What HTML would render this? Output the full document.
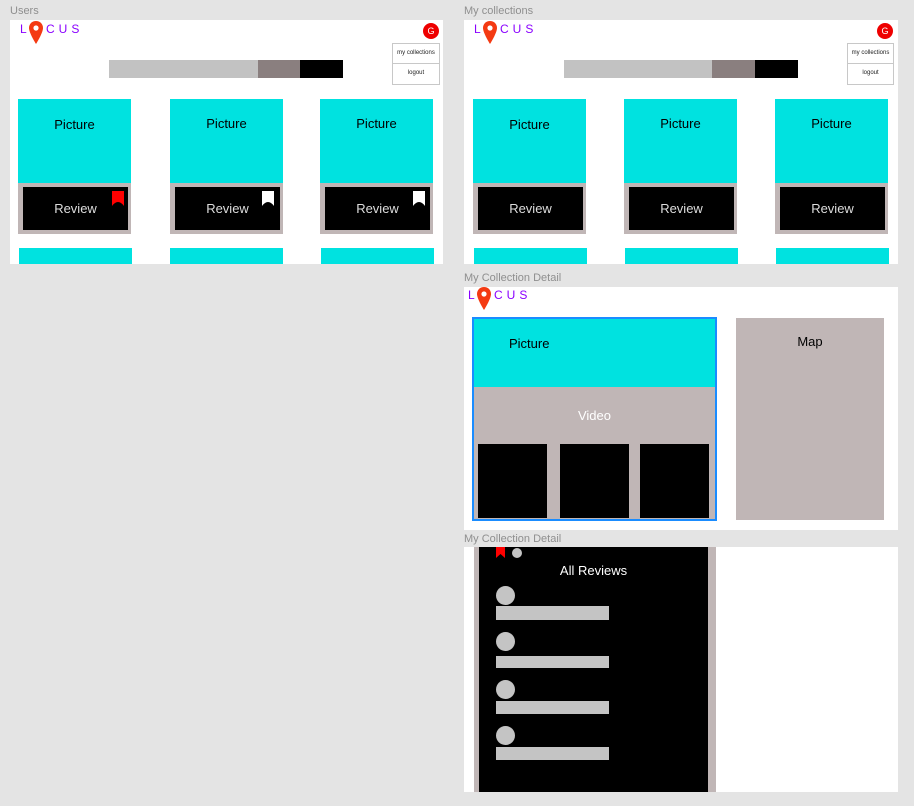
<!DOCTYPE html>
<html><head><meta charset="utf-8"><style>
*{margin:0;padding:0;box-sizing:border-box}
body{width:914px;height:806px;background:#e4e4e4;position:relative;overflow:hidden;font-family:"Liberation Sans",sans-serif}
div,span,svg{position:absolute}
.lbl{font-size:11px;color:#8f8f8f}
.fr{background:#fff}
.cy{background:#00e2e0;color:#000;font-size:13px;text-align:center}
.gr{background:#c0b6b6}
.bk{background:#000;color:#ddd;font-size:13px;text-align:center}
.logo{font-size:12px;color:#8a00ff;letter-spacing:4px}
.av{width:16px;height:16px;border-radius:50%;background:#e00;color:#fff;font-size:9px;text-align:center;line-height:16px}
.menu{border:1px solid #c8c8c8;background:#fff;font-size:6px;color:#222;text-align:center}
.gc{background:#c4c4c4}
</style></head><body>

<div class="lbl" style="left:10px;top:5px">Users</div>
<div class="lbl" style="left:464px;top:5px">My collections</div>
<div class="lbl" style="left:464px;top:272px">My Collection Detail</div>
<div class="lbl" style="left:464px;top:533px">My Collection Detail</div>

<!-- Frame 1 -->
<div class="fr" style="left:10px;top:20px;width:433px;height:244px;overflow:hidden">
  <div class="logo" style="left:10px;top:2px">L</div>
  <svg style="left:19px;top:1px" width="14" height="23" viewBox="0 0 14 23"><path d="M7 0C3 0 0 3 0 7c0 5 7 16 7 16s7-11 7-16C14 3 11 0 7 0z" fill="#f43a12"/><circle cx="7" cy="7" r="2.6" fill="#fff"/></svg>
  <div class="logo" style="left:36px;top:2px">CUS</div>
  <div class="av" style="left:413px;top:3px">G</div>
  <div class="menu" style="left:382px;top:23px;width:48px;height:42px"><div style="left:0;top:6px;width:46px">my collections</div><div style="left:0;top:19px;width:46px;border-top:1px solid #c8c8c8;padding-top:6px">logout</div></div>
  <div style="left:99px;top:40px;width:149px;height:18px;background:#c2c2c2"></div>
  <div style="left:248px;top:40px;width:42px;height:18px;background:#8a7f7f"></div>
  <div style="left:290px;top:40px;width:43px;height:18px;background:#000"></div>

  <div class="cy" style="left:8px;top:79px;width:113px;height:84px;padding-top:18px">Picture</div>
  <div class="gr" style="left:8px;top:163px;width:113px;height:51px"><div class="bk" style="left:5px;top:4px;width:105px;height:43px;line-height:43px">Review</div>
    <svg style="left:94px;top:8px" width="12" height="15" viewBox="0 0 12 15"><path d="M0 0H12V15Q6 7 0 15Z" fill="#f00"/></svg></div>
  <div class="cy" style="left:160px;top:79px;width:113px;height:84px;padding-top:17px">Picture</div>
  <div class="gr" style="left:160px;top:163px;width:113px;height:51px"><div class="bk" style="left:5px;top:4px;width:105px;height:43px;line-height:43px">Review</div>
    <svg style="left:92px;top:8px" width="12" height="15" viewBox="0 0 12 15"><path d="M0 0H12V15Q6 7 0 15Z" fill="#fff"/></svg></div>
  <div class="cy" style="left:310px;top:79px;width:113px;height:84px;padding-top:17px">Picture</div>
  <div class="gr" style="left:310px;top:163px;width:113px;height:51px"><div class="bk" style="left:5px;top:4px;width:105px;height:43px;line-height:43px">Review</div>
    <svg style="left:93px;top:8px" width="12" height="15" viewBox="0 0 12 15"><path d="M0 0H12V15Q6 7 0 15Z" fill="#fff"/></svg></div>
  <div class="cy" style="left:9px;top:228px;width:113px;height:20px"></div>
  <div class="cy" style="left:160px;top:228px;width:113px;height:20px"></div>
  <div class="cy" style="left:311px;top:228px;width:113px;height:20px"></div>
</div>

<!-- Frame 2 -->
<div class="fr" style="left:464px;top:20px;width:434px;height:244px;overflow:hidden">
  <div class="logo" style="left:10px;top:2px">L</div>
  <svg style="left:19px;top:1px" width="14" height="23" viewBox="0 0 14 23"><path d="M7 0C3 0 0 3 0 7c0 5 7 16 7 16s7-11 7-16C14 3 11 0 7 0z" fill="#f43a12"/><circle cx="7" cy="7" r="2.6" fill="#fff"/></svg>
  <div class="logo" style="left:36px;top:2px">CUS</div>
  <div class="av" style="left:413px;top:3px">G</div>
  <div class="menu" style="left:383px;top:23px;width:47px;height:42px"><div style="left:0;top:6px;width:45px">my collections</div><div style="left:0;top:19px;width:45px;border-top:1px solid #c8c8c8;padding-top:6px">logout</div></div>
  <div style="left:100px;top:40px;width:148px;height:18px;background:#c2c2c2"></div>
  <div style="left:248px;top:40px;width:43px;height:18px;background:#8a7f7f"></div>
  <div style="left:291px;top:40px;width:43px;height:18px;background:#000"></div>

  <div class="cy" style="left:9px;top:79px;width:113px;height:84px;padding-top:18px">Picture</div>
  <div class="gr" style="left:9px;top:163px;width:113px;height:51px"><div class="bk" style="left:5px;top:4px;width:105px;height:43px;line-height:43px">Review</div></div>
  <div class="cy" style="left:160px;top:79px;width:113px;height:84px;padding-top:17px">Picture</div>
  <div class="gr" style="left:160px;top:163px;width:113px;height:51px"><div class="bk" style="left:5px;top:4px;width:105px;height:43px;line-height:43px">Review</div></div>
  <div class="cy" style="left:311px;top:79px;width:113px;height:84px;padding-top:17px">Picture</div>
  <div class="gr" style="left:311px;top:163px;width:113px;height:51px"><div class="bk" style="left:5px;top:4px;width:105px;height:43px;line-height:43px">Review</div></div>
  <div class="cy" style="left:10px;top:228px;width:113px;height:20px"></div>
  <div class="cy" style="left:161px;top:228px;width:113px;height:20px"></div>
  <div class="cy" style="left:312px;top:228px;width:113px;height:20px"></div>
</div>

<!-- Frame 3 -->
<div class="fr" style="left:464px;top:287px;width:434px;height:243px">
  <div class="logo" style="left:4px;top:1px">L</div>
  <svg style="left:13px;top:0px" width="14" height="23" viewBox="0 0 14 23"><path d="M7 0C3 0 0 3 0 7c0 5 7 16 7 16s7-11 7-16C14 3 11 0 7 0z" fill="#f43a12"/><circle cx="7" cy="7" r="2.6" fill="#fff"/></svg>
  <div class="logo" style="left:30px;top:1px">CUS</div>
  <div style="left:8px;top:30px;width:245px;height:204px;border:2px solid #1a8cff;background:#c0b6b6">
    <div class="cy" style="left:0;top:0;width:241px;height:68px;text-align:left;padding:17px 0 0 35px">Picture</div>
    <div style="left:0;top:89px;width:241px;text-align:center;color:#fff;font-size:13px">Video</div>
    <div style="left:4px;top:125px;width:69px;height:74px;background:#000"></div>
    <div style="left:86px;top:125px;width:69px;height:74px;background:#000"></div>
    <div style="left:166px;top:125px;width:69px;height:74px;background:#000"></div>
  </div>
  <div class="gr" style="left:272px;top:31px;width:148px;height:202px;text-align:center;font-size:13px;padding-top:16px;color:#000">Map</div>
</div>

<!-- Frame 4 -->
<div class="fr" style="left:464px;top:547px;width:434px;height:245px;overflow:hidden">
  <div class="gr" style="left:10px;top:0;width:242px;height:245px"></div>
  <div style="left:15px;top:0;width:229px;height:245px;background:#000"></div>
  <svg style="left:32px;top:0" width="9" height="11" viewBox="0 0 9 11"><path d="M0 0H9V11L4.5 7L0 11Z" fill="#f00"/></svg>
  <div class="gc" style="left:48px;top:1px;width:10px;height:10px;border-radius:50%"></div>
  <div style="left:15px;top:16px;width:229px;text-align:center;color:#fff;font-size:13px">All Reviews</div>
  <div class="gc" style="left:32px;top:39px;width:19px;height:19px;border-radius:50%"></div>
  <div class="gc" style="left:32px;top:59px;width:113px;height:14px"></div>
  <div class="gc" style="left:32px;top:85px;width:19px;height:19px;border-radius:50%"></div>
  <div class="gc" style="left:32px;top:109px;width:113px;height:12px"></div>
  <div class="gc" style="left:32px;top:133px;width:19px;height:19px;border-radius:50%"></div>
  <div class="gc" style="left:32px;top:154px;width:113px;height:13px"></div>
  <div class="gc" style="left:32px;top:179px;width:19px;height:19px;border-radius:50%"></div>
  <div class="gc" style="left:32px;top:200px;width:113px;height:13px"></div>
</div>
</body></html>
